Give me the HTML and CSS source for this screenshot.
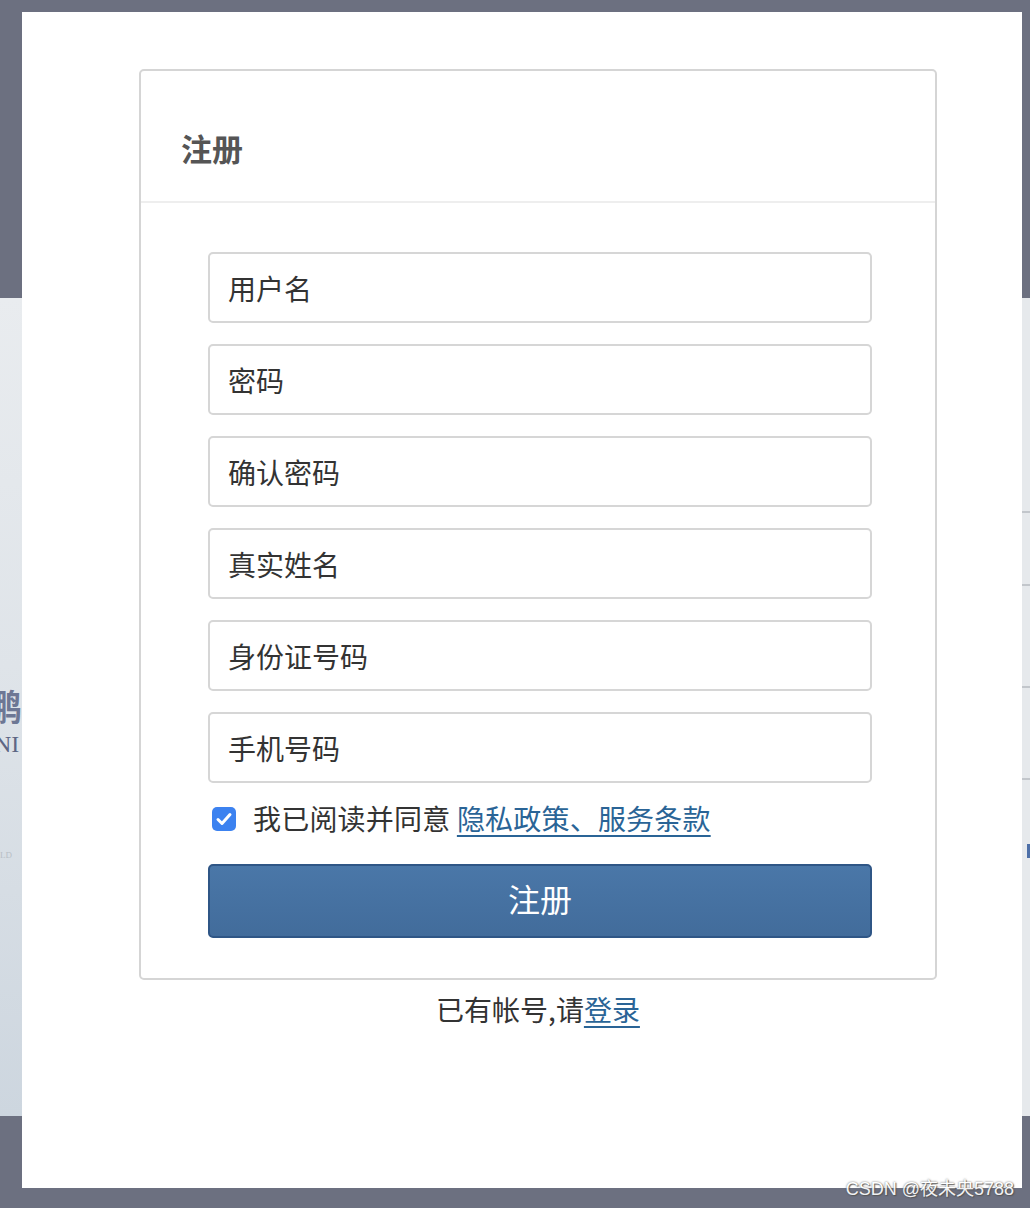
FILE: index.html
```html
<!DOCTYPE html>
<html lang="zh-CN">
<head>
<meta charset="utf-8">
<title>注册</title>
<link rel="stylesheet" href="styles.css">
</head>
<body>
<div class="backdrop">
  <div class="top-band"></div>
  <div class="page-band">
    <div class="left-strip">
      <span class="brand-cn">鹏</span>
      <span class="brand-en">NI</span>
      <span class="brand-sub">LD</span>
    </div>
    <div class="right-strip">
      <div class="rline l1"></div>
      <div class="rline l2"></div>
      <div class="rline l3"></div>
      <div class="rline l4"></div>
      <div class="rmark"></div>
    </div>
  </div>
  <div class="bottom-band"></div>
</div>

<div class="modal">
  <div class="card">
    <div class="card-header">
      <h2 class="card-title">注册</h2>
    </div>
    <form class="card-body">
      <input class="field" type="text" placeholder="用户名">
      <input class="field" type="password" placeholder="密码">
      <input class="field" type="password" placeholder="确认密码">
      <input class="field" type="text" placeholder="真实姓名">
      <input class="field" type="text" placeholder="身份证号码">
      <input class="field" type="text" placeholder="手机号码">
      <label class="agree">
        <span class="check">
          <svg viewBox="0 0 24 24" width="24" height="24"><path d="M6 12.5l4 4 8-9" fill="none" stroke="#fff" stroke-width="3" stroke-linecap="round" stroke-linejoin="round"/></svg>
        </span>
        <span class="agree-text">我已阅读并同意 <a class="link" href="#">隐私政策、服务条款</a></span>
      </label>
      <button class="submit" type="button">注册</button>
    </form>
  </div>
  <p class="login-line">已有帐号,请<a class="link" href="#">登录</a></p>
</div>

<div class="watermark">CSDN @夜未央5788</div>
</body>
</html>
```

FILE: styles.css
```css
html, body {
  margin: 0;
  padding: 0;
}
body {
  width: 1030px;
  height: 1208px;
  overflow: hidden;
  background: #6c7080;
  font-family: "Noto Sans CJK SC", "Noto Sans", sans-serif;
  position: relative;
}

/* background page behind the modal */
.backdrop {
  display: flex;
  flex-direction: column;
  height: 1208px;
}
.top-band {
  height: 298px;
  background: #6c7080;
}
.page-band {
  height: 818px;
  display: flex;
  justify-content: space-between;
  background: linear-gradient(180deg, #e9ecef 0%, #dfe4e9 45%, #cdd6df 100%);
}
.bottom-band {
  flex: 1;
  background: #6c7080;
}
.left-strip {
  width: 22px;
  position: relative;
  overflow: hidden;
}
.brand-cn {
  position: absolute;
  top: 381px;
  left: -14px;
  font-family: "Noto Sans CJK SC", serif;
  font-size: 36px;
  color: #6d7794;
  font-weight: 700;
}
.brand-en {
  position: absolute;
  top: 433px;
  left: -6px;
  font-family: "Liberation Serif", serif;
  font-size: 24px;
  color: #5d6684;
}
.brand-sub {
  position: absolute;
  top: 552px;
  left: 0;
  font-family: "Liberation Serif", serif;
  font-size: 9px;
  color: #b8bec6;
}
.right-strip {
  width: 8px;
  position: relative;
  background: #e6e9ec;
}
.rline {
  position: absolute;
  left: 0;
  right: 0;
  height: 2px;
  background: #c2c6cb;
}
.l1 { top: 213px; }
.l2 { top: 286px; }
.l3 { top: 388px; }
.l4 { top: 480px; }
.rmark {
  position: absolute;
  top: 546px;
  left: 5px;
  width: 3px;
  height: 14px;
  background: #4d6fa8;
}

/* modal */
.modal {
  position: absolute;
  top: 12px;
  left: 22px;
  width: 1000px;
  height: 1176px;
  background: #fff;
  box-sizing: border-box;
  padding-top: 57px;
  padding-left: 117px;
}
.card {
  width: 798px;
  box-sizing: border-box;
  border: 2px solid #d5d5d5;
  border-radius: 5px;
}
.card-header {
  height: 132px;
  box-sizing: border-box;
  border-bottom: 2px solid #eeeeee;
  display: flex;
  align-items: center;
  padding-left: 40px;
}
.card-title {
  margin: 0;
  font-size: 31px;
  font-weight: 700;
  color: #555;
  line-height: 1;
  padding-top: 22px;
}
.card-body {
  display: flex;
  flex-direction: column;
  padding: 49px 63px 40px 67px;
}
.field {
  display: block;
  box-sizing: border-box;
  width: 664px;
  height: 71px;
  margin: 0 0 21px 0;
  padding: 0 18px;
  border: 2px solid #d6d6d6;
  border-radius: 5px;
  background: #fff;
  font-family: "Noto Sans CJK SC", "Noto Sans", sans-serif;
  font-size: 28px;
  color: #333;
  outline: none;
}
.field::placeholder {
  color: #333;
  opacity: 1;
}
.field:nth-of-type(6) {
  margin-bottom: 0;
}
.agree {
  display: flex;
  align-items: center;
  height: 70px;
  padding-left: 4px;
  margin-bottom: 11px;
  box-sizing: border-box;
}
.check {
  width: 24px;
  height: 24px;
  border-radius: 5px;
  background: #3c82f0;
  display: flex;
  align-items: center;
  justify-content: center;
  margin-right: 17px;
  margin-top: 2px;
}
.check svg {
  display: block;
}
.agree-text {
  font-size: 28px;
  color: #333;
  line-height: 1;
  letter-spacing: 0.2px;
}
.link {
  color: #2a6496;
  text-decoration: underline;
  text-underline-offset: 5px;
  text-decoration-thickness: 2px;
}
.submit {
  width: 664px;
  height: 74px;
  box-sizing: border-box;
  border: 2px solid #2f5686;
  border-radius: 5px;
  background: linear-gradient(180deg, #4a77a8 0%, #426c9b 100%);
  color: #fff;
  font-family: "Noto Sans CJK SC", "Noto Sans", sans-serif;
  font-size: 32px;
  padding: 0 0 6px 0;
  cursor: pointer;
}
.login-line {
  margin: 9px 0 0 0;
  width: 798px;
  text-align: center;
  font-size: 28px;
  color: #333;
  line-height: 40px;
}

.watermark {
  position: absolute;
  right: 16px;
  bottom: 8px;
  font-family: "Liberation Sans", "Noto Sans CJK SC", sans-serif;
  font-size: 18px;
  color: #fff;
  text-shadow: 0 0 2px #555, 1px 1px 1px #555;
  opacity: 0.9;
}
```
